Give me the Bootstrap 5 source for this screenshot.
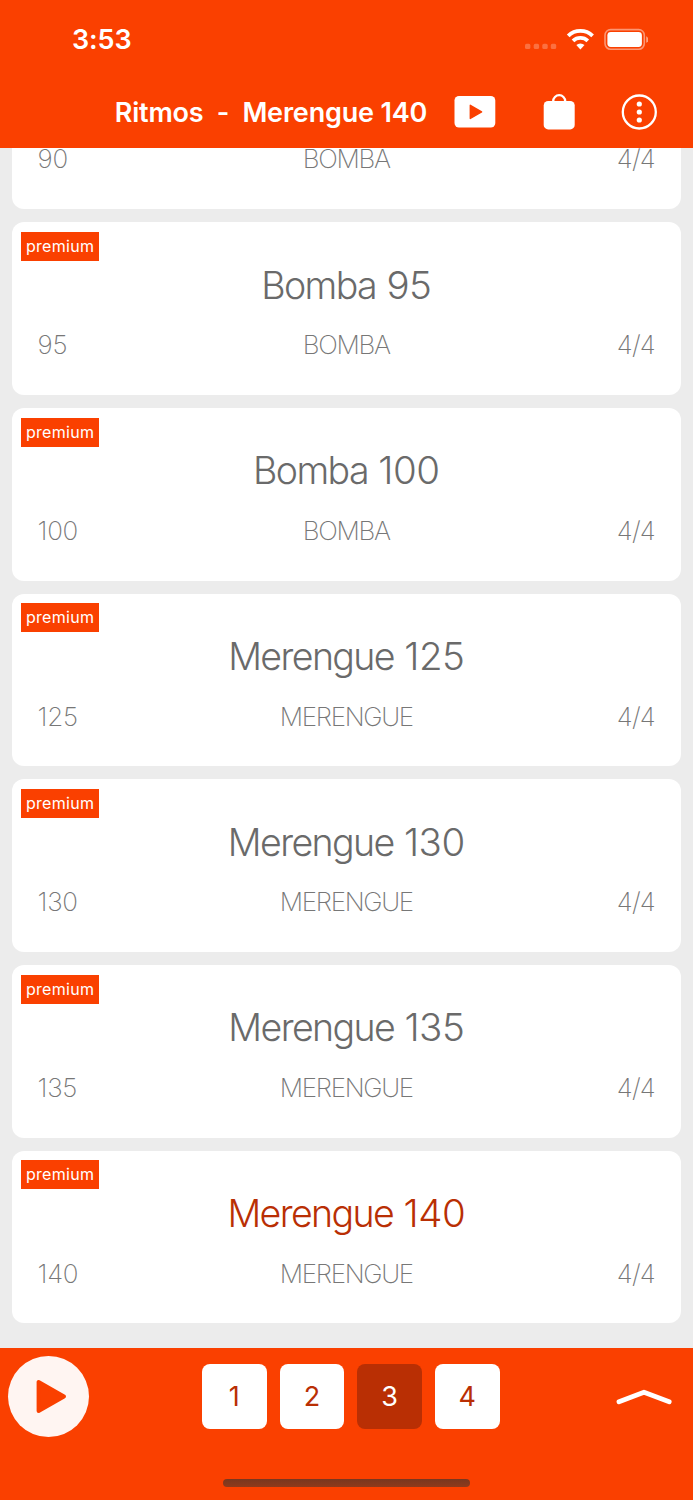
<!DOCTYPE html>
<html lang="es">
<head>
<meta charset="utf-8">
<meta name="viewport" content="width=device-width, initial-scale=1">
<title>Ritmos</title>
<link rel="stylesheet" href="https://cdn.jsdelivr.net/npm/bootstrap@5.3.0/dist/css/bootstrap.min.css">
<style>
:root{--brand:#fa4000;--dark:#b92f04}
body{font-family:Inter,"Liberation Sans",sans-serif;background:#ececec;height:1500px;overflow:hidden}
.brand{background:var(--brand);color:#fff}
.top-area{height:148px}
.status{height:78px;padding:0 45px 0 72px}
.clock{font-size:27px;font-weight:600;letter-spacing:-.1px;padding-top:2px}
.heading{font-size:27px;font-weight:600;line-height:40px;white-space:pre;letter-spacing:-.17px;width:313px;padding-top:1px}
.toolbar{height:68px;padding:0 36px 0 114.7px}
.toolbar .shop{margin-left:16px;margin-right:0}
.toolbar .video{margin-left:-3.5px}
.rhythms{gap:13px;padding:0 12px 24.7px 11.6px}
.rhythm{height:172.7px;border:0;border-radius:12px;flex:none;padding:0 26px}
.rhythm.partial{height:61.2px;border-top-left-radius:0;border-top-right-radius:0}
.partial .info{margin-top:-4.8px}
.tag{position:absolute;left:9.5px;top:9.7px;width:78px;height:29px;background:var(--brand);color:#fff;font-size:16px;line-height:29.4px;letter-spacing:.3px;text-align:center}
.name{font-size:38.5px;font-weight:300;line-height:46px;margin-top:39.4px;letter-spacing:-.5px;color:#6a6a6a}
.name span{font-size:37.5px;letter-spacing:-1.6px}
.name.current{color:var(--dark)}
.info{font-size:26px;font-weight:200;line-height:32px;margin-top:20.6px;letter-spacing:-.3px;color:#777}
.info .style-name{letter-spacing:-1.3px}
.info .meter{letter-spacing:-.8px}
.bottom-area{height:152.5px}
.controls{height:97px;padding:0 20px 0 8px}
.play{width:81px;height:81px;border-radius:50%;background:#fff5f2}
.beats{gap:13px;margin-left:-2.4px}
.beat{width:64.7px;height:64.7px;border-radius:8px;border:0;background:#fff;color:var(--dark);font-size:27px;font-weight:400;line-height:66px;padding:0}
.beat.on{background:var(--dark);color:#fff}
.home{width:247px;height:8px;border-radius:4px;background:linear-gradient(#78371f,#8f3a1b);margin-bottom:13.5px}
</style>
</head>
<body class="d-flex flex-column">
<header class="brand top-area flex-shrink-0">
  <div class="status d-flex justify-content-between align-items-center">
    <span class="clock">3:53</span>
    <svg width="126" height="30" viewBox="522 24 126 30">
      <g fill="#fff" fill-opacity=".25"><rect x="525" y="43.8" width="5.4" height="5.2" rx="1.6"/><rect x="533.7" y="43.8" width="5.4" height="5.2" rx="1.6"/><rect x="542.3" y="43.8" width="5.4" height="5.2" rx="1.6"/><rect x="550.8" y="43.8" width="5.4" height="5.2" rx="1.6"/></g>
      <g fill="none" stroke="#fff" stroke-width="3.8"><path d="M568.2 35.8a17.5 17.5 0 0 1 24.4 0"/><path d="M573 40.9a10.8 10.8 0 0 1 14.8 0"/></g>
      <path d="M576.3 45a6 6 0 0 1 8.2 0L580.4 49.4z" fill="#fff"/>
      <rect x="605" y="29.6" width="39.3" height="19.6" rx="5.6" fill="none" stroke="#fff" stroke-opacity=".45" stroke-width="1.6"/>
      <rect x="607.4" y="32" width="34.5" height="14.9" rx="3.4" fill="#fff"/>
      <path d="M646.2 36.2c3 1.2 3 5.4 0 6.6z" fill="#fff" fill-opacity=".5"/>
    </svg>
  </div>
  <div class="toolbar d-flex justify-content-between align-items-center">
    <h1 class="heading m-0">Ritmos  -  Merengue 140</h1>
    <svg class="video" width="42" height="34" viewBox="454.5 95.5 42 34"><rect x="455" y="96.5" width="40.8" height="31.6" rx="4.5" fill="#fff"/><path d="M470.8 105.8l11.3 6.6-11.3 6.6z" fill="#fa4000" stroke="#fa4000" stroke-width="1.4" stroke-linejoin="round"/></svg>
    <svg class="shop" width="32" height="36" viewBox="543 94 32 36"><rect x="543.7" y="101" width="31" height="28.4" rx="4.5" fill="#fff"/><path d="M553.2 102v-.8a6 6 0 0 1 12 0v.8" fill="none" stroke="#fff" stroke-width="2.3"/></svg>
    <svg width="36" height="36" viewBox="621 94 36 36" class="ms-3"><circle cx="639.3" cy="112" r="16.5" fill="none" stroke="#fff" stroke-width="2.3"/><g fill="#fff"><circle cx="639.3" cy="104" r="2.6"/><circle cx="639.3" cy="112" r="2.6"/><circle cx="639.3" cy="120" r="2.6"/></g></svg>
  </div>
</header>

<main id="list" class="rhythms d-flex flex-column justify-content-end flex-grow-1"></main>

<footer class="brand bottom-area flex-shrink-0 d-flex flex-column align-items-center">
  <div class="controls w-100 d-flex justify-content-between align-items-center">
    <div class="play"><svg width="81" height="81" viewBox="0 0 81 81"><path d="M30.6 26v29L56 40.6z" fill="#fa4000" stroke="#fa4000" stroke-width="4" stroke-linejoin="round"/></svg></div>
    <div class="d-flex beats"><button class="beat">1</button><button class="beat">2</button><button class="beat on">3</button><button class="beat">4</button></div>
    <svg width="58" height="20" viewBox="615 1386.5 58 20"><path d="M619 1401.3l25-9.6 25.2 9.6" fill="none" stroke="#fff" stroke-width="4.8" stroke-linecap="round" stroke-linejoin="round"/></svg>
  </div>
  <div class="home mt-auto"></div>
</footer>
<script src="https://cdn.jsdelivr.net/npm/bootstrap@5.3.0/dist/js/bootstrap.bundle.min.js"></script>
<script>
const rhythms=[['Bomba',90],['Bomba',95],['Bomba',100],['Merengue',125],['Merengue',130],['Merengue',135],['Merengue',140]];
// the first card is scrolled half under the header, so only its info row shows
document.getElementById('list').innerHTML=rhythms.map(([n,b],i)=>`<article class="card rhythm${i?'':' partial'}">${i?`<span class="tag">premium</span><h2 class="name mb-0 text-center${b===140?' current':''}"><span>${n}</span> ${b}</h2>`:''}<div class="info row gx-0"><span class="col-3">${b}</span><span class="col-6 text-center style-name">${n.toUpperCase()}</span><span class="col-3 text-end meter">4/4</span></div></article>`).join('');
</script>
</body>
</html>
